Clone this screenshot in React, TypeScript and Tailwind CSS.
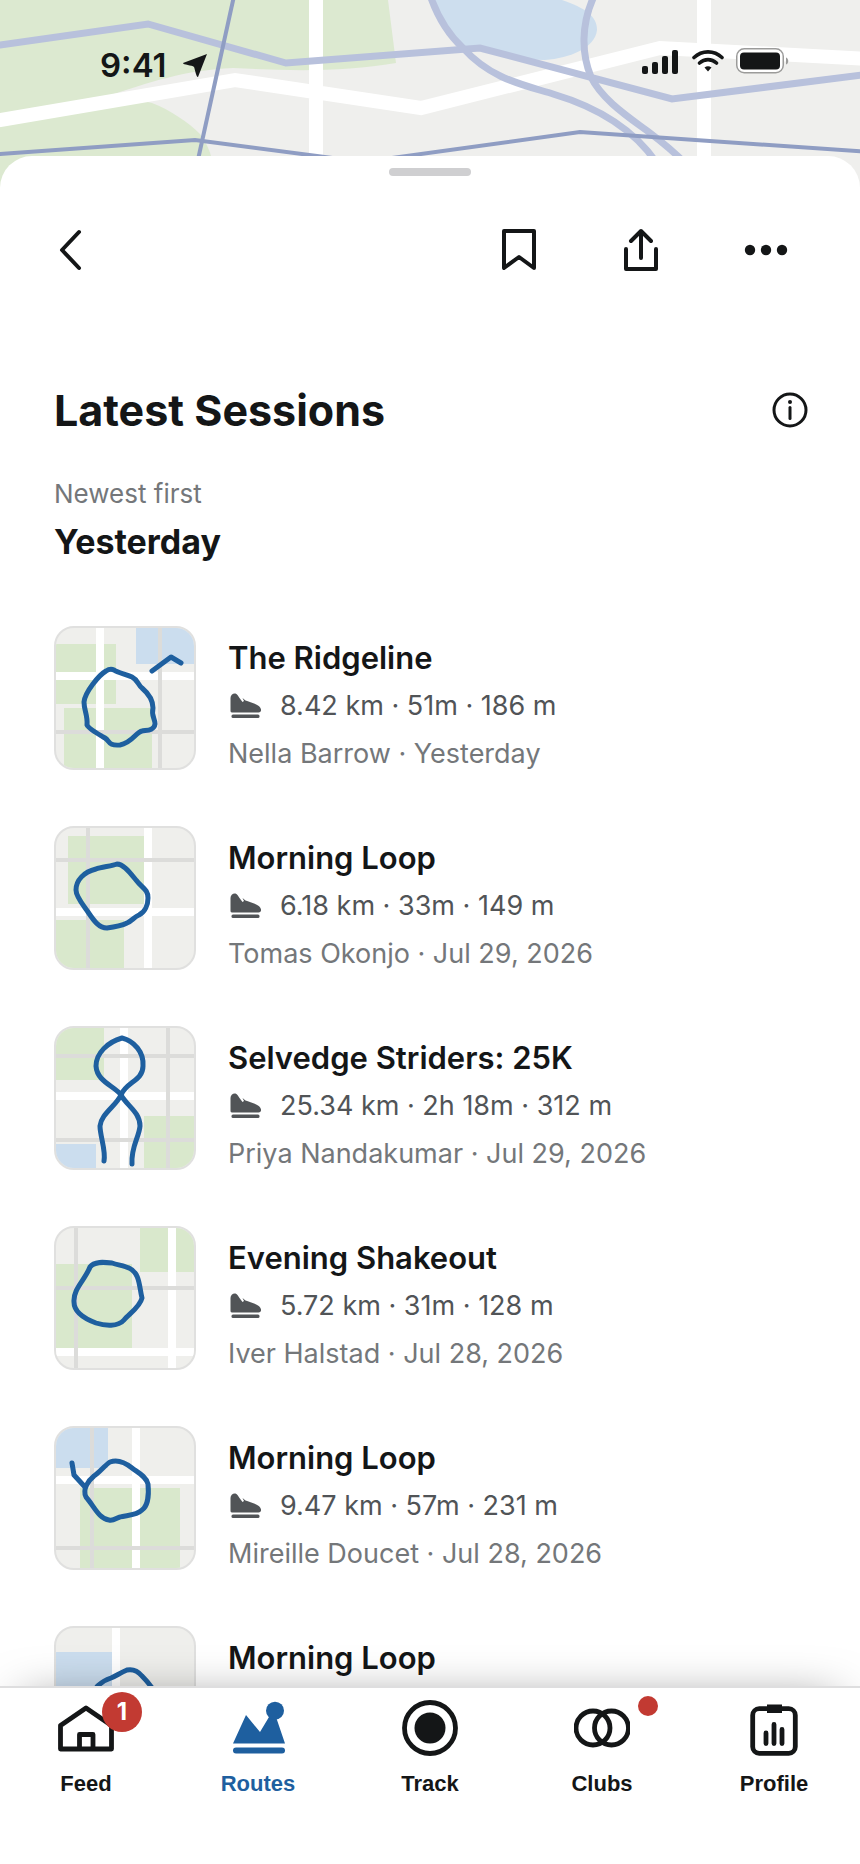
import type { ReactNode } from 'react';

interface Area {
  kind: 'park' | 'water' | 'street' | 'road';
  x: number;
  y: number;
  w: number;
  h: number;
}

interface Session {
  title: string;
  stats?: string;
  meta?: string;
  areas: Area[];
  routes: string[];
}

const AREA_FILL = {
  park: 'fill-[#d9e8cc]',
  water: 'fill-[#cbddee]',
  street: 'fill-[#dcdcda]',
  road: 'fill-white',
};

const SESSIONS: Session[] = [
  {
    title: 'The Ridgeline',
    stats: '8.42 km · 51m · 186 m',
    meta: 'Nella Barrow · Yesterday',
    areas: [
      { kind: 'park', x: 0, y: 16, w: 60, h: 60 },
      { kind: 'park', x: 8, y: 80, w: 88, h: 60 },
      { kind: 'water', x: 80, y: 0, w: 60, h: 36 },
      { kind: 'road', x: 0, y: 44, w: 140, h: 8 },
      { kind: 'road', x: 40, y: 0, w: 8, h: 140 },
      { kind: 'street', x: 0, y: 102, w: 140, h: 4 },
      { kind: 'street', x: 102, y: 0, w: 4, h: 140 },
    ],
    routes: [
      'M58 42C62 45 70 46 76 49C82 52 82 57 86 60C93 66 97 72 97 80C95 88 99 90 99 96C98 103 90 102 86 103C80 104 76 115 64 117C52 118 54 113 49 110C42 106 33 101 31 97C32 88 28 82 28 74C29 64 43 47 50 43C53 41 56 41 58 42Z',
      'M96 43L115 29L125 35',
    ],
  },
  {
    title: 'Morning Loop',
    stats: '6.18 km · 33m · 149 m',
    meta: 'Tomas Okonjo · Jul 29, 2026',
    areas: [
      { kind: 'park', x: 12, y: 8, w: 76, h: 68 },
      { kind: 'park', x: 0, y: 92, w: 68, h: 48 },
      { kind: 'road', x: 0, y: 80, w: 140, h: 8 },
      { kind: 'road', x: 88, y: 0, w: 8, h: 140 },
      { kind: 'street', x: 0, y: 30, w: 140, h: 4 },
      { kind: 'street', x: 30, y: 0, w: 4, h: 140 },
    ],
    routes: [
      'M61 36C56 38 45 39 40 41C28 44 20 52 20 62C20 69 28 78 32 84C38 93 43 100 51 100C59 99 65 98 71 95C76 93 78 89 83 87C89 84 92 77 92 70C92 61 86 60 80 52C75 46 68 36 61 36Z',
    ],
  },
  {
    title: 'Selvedge Striders: 25K',
    stats: '25.34 km · 2h 18m · 312 m',
    meta: 'Priya Nandakumar · Jul 29, 2026',
    areas: [
      { kind: 'park', x: 0, y: 0, w: 48, h: 52 },
      { kind: 'park', x: 88, y: 88, w: 52, h: 52 },
      { kind: 'water', x: 0, y: 116, w: 40, h: 24 },
      { kind: 'road', x: 0, y: 64, w: 140, h: 8 },
      { kind: 'road', x: 64, y: 0, w: 8, h: 140 },
      { kind: 'street', x: 0, y: 26, w: 140, h: 4 },
      { kind: 'street', x: 0, y: 110, w: 140, h: 4 },
      { kind: 'street', x: 110, y: 0, w: 4, h: 140 },
    ],
    routes: [
      'M48 133C50 122 44 108 44 98C45 86 60 78 65 67C70 54 87 53 87 38C88 24 78 13 66 10C52 14 40 25 40 38C41 54 59 58 65 67C71 78 84 84 84 98C83 110 75 118 76 136',
    ],
  },
  {
    title: 'Evening Shakeout',
    stats: '5.72 km · 31m · 128 m',
    meta: 'Iver Halstad · Jul 28, 2026',
    areas: [
      { kind: 'park', x: 0, y: 36, w: 76, h: 84 },
      { kind: 'park', x: 84, y: 0, w: 56, h: 44 },
      { kind: 'road', x: 0, y: 120, w: 140, h: 8 },
      { kind: 'road', x: 112, y: 0, w: 8, h: 140 },
      { kind: 'street', x: 0, y: 58, w: 140, h: 4 },
      { kind: 'street', x: 18, y: 0, w: 4, h: 140 },
    ],
    routes: [
      'M34 39C38 33 48 34 56 35C62 37 69 38 73 40C84 45 83 58 86 70C84 79 73 86 68 92C62 99 49 98 40 95C32 92 18 86 18 74C17 61 29 52 34 39Z',
    ],
  },
  {
    title: 'Morning Loop',
    stats: '9.47 km · 57m · 231 m',
    meta: 'Mireille Doucet · Jul 28, 2026',
    areas: [
      { kind: 'water', x: 0, y: 0, w: 52, h: 40 },
      { kind: 'park', x: 24, y: 60, w: 100, h: 80 },
      { kind: 'road', x: 0, y: 48, w: 140, h: 8 },
      { kind: 'road', x: 76, y: 0, w: 8, h: 140 },
      { kind: 'street', x: 0, y: 118, w: 140, h: 4 },
      { kind: 'street', x: 34, y: 0, w: 4, h: 140 },
    ],
    routes: [
      'M54 34C62 31 71 36 76 40C81 44 90 48 92 56C93 66 92 78 86 82C80 88 70 87 64 89C60 90 58 93 53 92C43 91 38 78 30 69C26 61 33 52 38 48C44 44 48 38 54 34Z',
      'M16 35L18 47L29 59',
    ],
  },
  {
    title: 'Morning Loop',
    areas: [
      { kind: 'water', x: 0, y: 24, w: 56, h: 60 },
      { kind: 'road', x: 56, y: 0, w: 8, h: 140 },
    ],
    routes: [
      'M71 42C64 45 60 48 55 50C46 53 36 60 36 72C36 90 52 104 66 106C84 106 102 90 102 74C102 66 92 54 86 48C81 42 76 41 71 42Z',
    ],
  },
];

function MapBackdrop() {
  return (
    <svg
      className="absolute inset-x-0 top-0 h-[200px] w-full bg-[#efefed]"
      viewBox="0 0 860 200"
      preserveAspectRatio="xMidYMin slice"
      fill="none"
      aria-hidden="true"
    >
      <path d="M0 0H388L396 63C345 72 290 71 233 68C185 70 150 82 105 97L0 130Z" fill="#dce9d0" />
      <path d="M0 90C80 92 130 97 152 103C170 110 188 122 200 134Q208 145 211 156V200H0Z" fill="#dce9d0" />
      <path d="M430 0H562C585 8 597 16 597 30C595 48 570 58 545 60C510 60 475 50 458 44C445 30 436 15 430 0Z" fill="#cddeee" />
      <path
        d="M-10 122L0 120L235 80L421 108L660 48L870 59M316 0V200M704 0V200"
        stroke="#fff"
        strokeWidth="14"
      />
      <g stroke="#b8c1dc" strokeWidth="7">
        <path d="M-10 46L0 45L148 24L286 63L480 48L672 99L870 74" />
        <path d="M429 -8C438 20 452 38 463 48C490 78 520 84 553 94C600 108 634 130 656 162" />
        <path d="M595 -6C580 25 582 55 591 77C602 100 630 118 650 133C662 142 674 152 686 164" />
      </g>
      <path d="M234 -4L190 196" stroke="#8f9dc3" strokeWidth="4" />
      <path d="M-10 155L0 154L195 140L363 162L580 132L870 152" stroke="#8f9dc3" strokeWidth="4" />
    </svg>
  );
}

function StatusBar() {
  return (
    <div className="relative flex items-center justify-between pt-[45px] pr-[70px] pl-[100px] text-[#141617]">
      <div className="flex items-center gap-4">
        <span className="text-[33px] leading-10 font-semibold">9:41</span>
        <svg className="h-6 w-6" viewBox="0 0 24 24" fill="currentColor" aria-hidden="true">
          <path d="M24 1L0 10C0 12 9 12 11 14C12 16 13 24 15 24Z" />
        </svg>
      </div>
      <div className="flex items-start gap-3 pb-2.5">
        <svg className="mt-1 mr-0.5 h-6 w-9" viewBox="0 0 36 24" fill="currentColor" aria-hidden="true">
          <rect x="0" y="16" width="6" height="8" rx="2" />
          <rect x="10" y="12" width="6" height="12" rx="2" />
          <rect x="20" y="6" width="6" height="18" rx="2" />
          <rect x="30" y="0" width="6" height="24" rx="2" />
        </svg>
        <svg className="mt-1 h-6 w-8" viewBox="0 0 32 24" fill="none" stroke="currentColor" strokeWidth="3.6" strokeLinecap="round" aria-hidden="true">
          <path d="M2 7.5C10 0 22 0 30 7.5M7.5 13C12.5 8.5 19.5 8.5 24.5 13" />
          <path d="M12.5 17.5Q16 15 19.5 17.5L16 21.5Z" fill="currentColor" stroke="none" />
        </svg>
        <svg className="mt-0.5 h-[26px] w-[54px]" viewBox="0 0 54 26" aria-hidden="true">
          <rect x="0.75" y="0.75" width="46.5" height="24" rx="7.5" fill="#fff" stroke="#9b9b9a" strokeWidth="1.5" />
          <rect x="4" y="4.5" width="40" height="17" rx="4" fill="#141617" />
          <path d="M50 9.5C53 10.5 53 15.5 50 16.5Z" fill="#9b9b9a" />
        </svg>
      </div>
    </div>
  );
}

function ToolbarButton({ label, children }: { label: string; children: ReactNode }) {
  return (
    <button type="button" aria-label={label} className="flex h-12 w-12 items-center justify-center">
      <svg
        className="h-12 w-12"
        viewBox="0 0 48 48"
        fill="none"
        stroke="currentColor"
        strokeWidth="4"
        strokeLinecap="round"
        strokeLinejoin="round"
      >
        {children}
      </svg>
    </button>
  );
}

function Toolbar() {
  return (
    <div className="flex h-[148px] items-center justify-between pr-[70px] pl-[46px]">
      <ToolbarButton label="Back">
        <path d="M33 6L16 24L33 42" />
      </ToolbarButton>
      <div className="flex items-center gap-[76px]">
        <ToolbarButton label="Save">
          <path d="M10 5H40V42L25 31L10 42Z" />
        </ToolbarButton>
        <ToolbarButton label="Share">
          <path d="M23 32V5M13 15L23 5L33 15M8 23V43H38V23" />
        </ToolbarButton>
        <ToolbarButton label="More">
          <g fill="currentColor" stroke="none">
            <circle cx="8" cy="24" r="5.2" />
            <circle cx="24" cy="24" r="5.2" />
            <circle cx="40" cy="24" r="5.2" />
          </g>
        </ToolbarButton>
      </div>
    </div>
  );
}

function RouteThumbnail({ areas, routes }: { areas: Area[]; routes: string[] }) {
  return (
    <div className="h-36 w-[142px] shrink-0 overflow-hidden rounded-[20px] border-2 border-[#e0e0df] bg-[#efefec]">
      <svg className="h-full w-full" viewBox="0 0 138 140" fill="none" aria-hidden="true">
        {areas.map((a, i) => (
          <rect key={i} x={a.x} y={a.y} width={a.w} height={a.h} className={AREA_FILL[a.kind]} />
        ))}
        {routes.map((d, i) => (
          <path key={i} d={d} stroke="#1e5f9f" strokeWidth="5" strokeLinecap="round" strokeLinejoin="round" />
        ))}
      </svg>
    </div>
  );
}

function ShoeIcon() {
  return (
    <svg className="h-[26px] w-8" viewBox="0 0 32 26" fill="currentColor" aria-hidden="true">
      <path d="M0.5 5C0.5 2 3 0 5.5 0.5C7.500 1 8 3 9.5 5L12.5 9L14 8L12.5 5L15.500 7.5C19 8.5 25 10.5 28 12.5C32 15 32 19.5 28.5 19.5H2C0.5 19.5 0.5 18.5 0.5 17Z" />
      <rect x="1.5" y="21.5" width="28" height="3.5" rx="1.5" />
    </svg>
  );
}

function SessionRow({ session }: { session: Session }) {
  return (
    <li className="flex min-h-[152px] items-start gap-8">
      <RouteThumbnail areas={session.areas} routes={session.routes} />
      <div className="min-w-0 pt-2">
        <h3 className="text-[31px] leading-[48px] font-semibold text-[#141617]">{session.title}</h3>
        {session.stats && (
          <p className="flex items-center gap-[18px] pl-0.5 text-[27px] leading-[48px] text-[#515457]">
            <ShoeIcon />
            {session.stats}
          </p>
        )}
        {session.meta && <p className="text-[27px] leading-[48px] text-[#74777a]">{session.meta}</p>}
      </div>
    </li>
  );
}

function NavItem({ label, active, badge, children }: { label: string; active?: boolean; badge?: ReactNode; children: ReactNode }) {
  return (
    <a
      href="#"
      aria-current={active ? 'page' : undefined}
      className={`flex flex-col items-center gap-3 ${active ? 'text-[#1e5f9f]' : 'text-[#141617]'}`}
    >
      <span className="relative">
        <svg className="h-14 w-14" viewBox="0 0 56 56" fill="none" stroke="currentColor" strokeWidth="4.8" strokeLinejoin="round" aria-hidden="true">
          {children}
        </svg>
        {badge}
      </span>
      <span className="font-['Liberation_Sans',Arial,sans-serif] text-[22px] leading-8 font-bold">{label}</span>
    </a>
  );
}

function BottomNav() {
  return (
    <nav className="relative z-10 grid shrink-0 grid-cols-5 border-t-2 border-[#dededf] bg-white pt-3 pb-16 shadow-[0_-8px_48px_-24px_rgba(0,0,0,0.5)]">
      <NavItem
        label="Feed"
        badge={
          <span className="absolute -top-2 left-11 flex h-10 w-10 items-center justify-center rounded-full bg-[#c23a32] text-2xl font-bold text-white">
            1
          </span>
        }
      >
        <path d="M2.5 25.5L28 8L53.5 25.5V49H2.5Z" />
        <path d="M21.5 49V34.5H35V49" />
      </NavItem>
      <NavItem label="Routes" active>
        <g fill="currentColor" stroke="none">
          <path d="M3 43.5L16 15L30 32L39 17H46L55 43.5Z" />
          <circle cx="45" cy="10.7" r="9" />
          <rect x="3" y="47.5" width="52" height="6" rx="3" />
        </g>
      </NavItem>
      <NavItem label="Track">
        <circle cx="28" cy="28" r="25.5" />
        <circle cx="28" cy="28" r="15.5" fill="currentColor" stroke="none" />
      </NavItem>
      <NavItem label="Clubs" badge={<span className="absolute -top-1 left-16 h-5 w-5 rounded-full bg-[#c23a32]" />}>
        <circle cx="19" cy="28" r="17" />
        <circle cx="37.5" cy="28" r="17" />
      </NavItem>
      <NavItem label="Profile">
        <rect x="6.7" y="8.7" width="42.6" height="44.6" rx="6.5" />
        <rect x="21" y="4.5" width="15" height="8.5" fill="currentColor" stroke="none" />
        <path d="M20 33V43.5M28 24.5V43.5M36 29.5V43.5" strokeLinecap="round" />
      </NavItem>
    </nav>
  );
}

export default function App() {
  return (
    <div className="relative flex h-screen flex-col bg-white font-[Inter,'Liberation_Sans',sans-serif]">
      <MapBackdrop />
      <header className="h-[156px] shrink-0">
        <StatusBar />
      </header>

      <main className="relative flex min-h-0 flex-1 flex-col rounded-t-[32px] bg-white pt-3 text-[#141617]">
        <div className="mx-auto h-2 w-[82px] shrink-0 rounded-full bg-[#cfcfd1]" />
        <div className="min-h-0 flex-1 overflow-y-auto [scrollbar-width:none]">
          <Toolbar />
          <section className="px-[54px] pt-[58px]">
            <div className="flex items-center justify-between">
              <h1 className="text-[43px] leading-[56px] font-bold">Latest Sessions</h1>
              <button type="button" aria-label="About sessions" className="-mr-0.5">
                <svg className="h-9 w-9" viewBox="0 0 36 36" fill="none" stroke="currentColor" strokeWidth="3" strokeLinecap="round">
                  <circle cx="18" cy="18" r="16" />
                  <path d="M18 15.5V26.5" />
                  <circle cx="18" cy="10" r="2" fill="currentColor" stroke="none" />
                </svg>
              </button>
            </div>
            <p className="mt-[38px] text-[26px] leading-9 text-[#74777a]">Newest first</p>
            <h2 className="mt-2.5 text-[34px] leading-10 font-bold">Yesterday</h2>
            <ul className="mt-16 flex flex-col gap-12 pb-12">
              {SESSIONS.map((s, i) => (
                <SessionRow key={i} session={s} />
              ))}
            </ul>
          </section>
        </div>
      </main>

      <BottomNav />
    </div>
  );
}
